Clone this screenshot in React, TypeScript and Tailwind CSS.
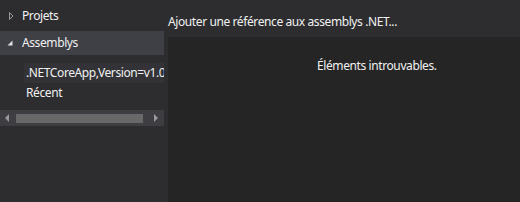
import React from "react";

export default function App() {
  const font = { fontFamily: '"Segoe UI", "Noto Sans", "Open Sans", sans-serif' };
  return (
    <div className="w-[520px] h-[202px] bg-[#2d2d30] text-[#f1f1f1] text-[12px] tracking-[-0.4px] flex overflow-hidden" style={font}>
      <div className="w-[164px] shrink-0 flex flex-col pt-[5px]">
        <div className="h-[22px] flex items-center">
          <svg width="22" height="22" viewBox="0 0 22 22" className="shrink-0">
            <path d="M9.5 7.5 L13 11 L9.5 14.5 Z" fill="none" stroke="#9a9a9a" strokeWidth="1" />
          </svg>
          <span>Projets</span>
        </div>
        <div className="h-[24px] mt-[4px] bg-[#3f3f46] flex items-center">
          <svg width="22" height="22" viewBox="0 0 22 22" className="shrink-0">
            <path d="M12.5 8.5 L12.5 13.5 L7.5 13.5 Z" fill="#e0e0e0" />
          </svg>
          <span>Assemblys</span>
        </div>
        <div className="mt-[8px] ml-[24px] h-[20px] bg-[#333337] flex items-center pl-[2px] whitespace-nowrap overflow-hidden">
          .NETCoreApp,Version=v1.0
        </div>
        <div className="ml-[26px] h-[19px] flex items-center">Récent</div>
        <div className="mt-[8px] h-[16px] bg-[#3e3e42] flex items-center">
          <svg width="16" height="16" viewBox="0 0 16 16" className="shrink-0">
            <path d="M9 4 L5 8 L9 12 Z" fill="#999999" />
          </svg>
          <div className="h-[9px] w-[127px] bg-[#686868]" />
          <div className="flex-1" />
          <svg width="16" height="16" viewBox="0 0 16 16" className="shrink-0">
            <path d="M6 4 L10 8 L6 12 Z" fill="#999999" />
          </svg>
        </div>
      </div>
      <div className="w-[4px] shrink-0" />
      <div className="flex-1 flex flex-col">
        <div className="h-[37px] flex items-center pt-[6px] whitespace-nowrap">Ajouter une référence aux assemblys .NET...</div>
        <div className="flex-1 bg-[#252526] pl-[149px] pt-[20px] whitespace-nowrap">Éléments introuvables.</div>
      </div>
    </div>
  );
}
